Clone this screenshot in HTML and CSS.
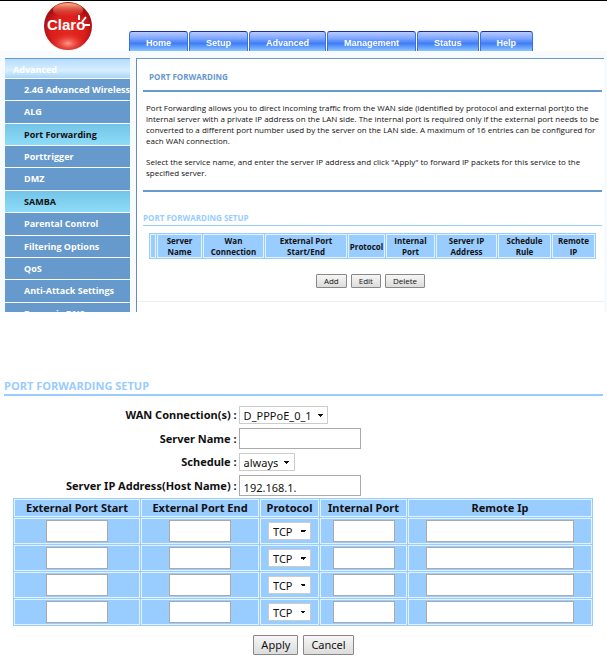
FILE: index.html
```html
<!DOCTYPE html>
<html lang="en">
<head>
    <meta charset="UTF-8">
    <meta name="viewport" content="width=device-width, initial-scale=1.0">
    <title>Port Forwarding</title>
    <link rel="stylesheet" href="styles.css">
</head>
<body>
    <header class="header">
        <div class="logo">
            <svg width="50" height="50" viewBox="0 0 50 50" role="img" aria-label="Claro">
                <defs>
                    <radialGradient id="ball" cx="50%" cy="60%" r="52%">
                        <stop offset="0" stop-color="#e5281f"/>
                        <stop offset="0.7" stop-color="#d81d1c"/>
                        <stop offset="1" stop-color="#a90f12"/>
                    </radialGradient>
                    <linearGradient id="shine" x1="0" y1="0" x2="0" y2="1">
                        <stop offset="0" stop-color="#ffb98f"/>
                        <stop offset="1" stop-color="#dc2a20" stop-opacity="0.2"/>
                    </linearGradient>
                    <radialGradient id="glow" cx="50%" cy="70%" r="50%">
                        <stop offset="0" stop-color="#ff9a8a"/>
                        <stop offset="1" stop-color="#e5281f" stop-opacity="0"/>
                    </radialGradient>
                </defs>
                <circle cx="25" cy="25" r="24" fill="url(#ball)"/>
                <ellipse cx="25" cy="38" rx="19" ry="11" fill="url(#glow)"/>
                <ellipse cx="25" cy="9" rx="15" ry="7" fill="url(#shine)"/>
                <text x="4" y="29" class="logo-text">Claro</text>
                <path d="M36 14v5M43 16l-4 5M41 24h6" stroke="#fff" stroke-width="2" fill="none"/>
            </svg>
        </div>
        <nav class="tabs">
            <a href="#">Home</a>
            <a href="#">Setup</a>
            <a href="#">Advanced</a>
            <a href="#">Management</a>
            <a href="#">Status</a>
            <a href="#">Help</a>
        </nav>
    </header>

    <div class="main">
        <nav class="sidebar">
            <h2>Advanced</h2>
            <div class="menu">
                <a href="#">2.4G Advanced Wireless</a>
                <a href="#">ALG</a>
                <a href="#" class="active">Port Forwarding</a>
                <a href="#">Porttrigger</a>
                <a href="#">DMZ</a>
                <a href="#" class="active">SAMBA</a>
                <a href="#">Parental Control</a>
                <a href="#">Filtering Options</a>
                <a href="#">QoS</a>
                <a href="#">Anti-Attack Settings</a>
                <a href="#">Dynamic DNS</a>
            </div>
        </nav>

        <main class="content">
            <h1>PORT FORWARDING</h1>
            <div class="intro">
                <p>Port Forwarding allows you to direct incoming traffic from the WAN side (identified by protocol and external port)to the internal server with a private IP address on the LAN side. The internal port is required only if the external port needs to be converted to a different port number used by the server on the LAN side. A maximum of 16 entries can be configured for each WAN connection.</p>
                <p>Select the service name, and enter the server IP address and click "Apply" to forward IP packets for this service to the specified server.</p>
            </div>

            <h2>PORT FORWARDING SETUP</h2>
            <table class="list">
                <colgroup>
                    <col class="w-check"><col class="w-name"><col class="w-wan"><col class="w-ext"><col class="w-proto"><col class="w-int"><col class="w-ip"><col class="w-rule"><col>
                </colgroup>
                <tr>
                    <th></th>
                    <th>Server<br>Name</th>
                    <th>Wan<br>Connection</th>
                    <th>External Port<br>Start/End</th>
                    <th>Protocol</th>
                    <th>Internal<br>Port</th>
                    <th>Server IP<br>Address</th>
                    <th>Schedule<br>Rule</th>
                    <th>Remote<br>IP</th>
                </tr>
            </table>
            <div class="actions">
                <button type="button">Add</button>
                <button type="button">Edit</button>
                <button type="button">Delete</button>
            </div>
        </main>
    </div>

    <form class="setup">
        <h2>PORT FORWARDING SETUP</h2>
        <div class="fields">
            <label for="wan">WAN Connection(s) :</label>
            <select id="wan" class="wan"><option>D_PPPoE_0_1</option></select>

            <label for="server-name">Server Name :</label>
            <input type="text" id="server-name">

            <label for="schedule">Schedule :</label>
            <select id="schedule" class="schedule"><option>always</option></select>

            <label for="server-ip">Server IP Address(Host Name) :</label>
            <input type="text" id="server-ip" value="192.168.1.">
        </div>

        <table class="ports">
            <colgroup>
                <col class="p-start"><col class="p-end"><col class="p-proto"><col class="p-int"><col>
            </colgroup>
            <tr>
                <th>External Port Start</th>
                <th>External Port End</th>
                <th>Protocol</th>
                <th>Internal Port</th>
                <th>Remote Ip</th>
            </tr>
            <tr>
                <td><input type="text" aria-label="External Port Start 1"></td>
                <td><input type="text" aria-label="External Port End 1"></td>
                <td><select aria-label="Protocol 1"><option>TCP</option></select></td>
                <td><input type="text" aria-label="Internal Port 1"></td>
                <td><input type="text" class="remote" aria-label="Remote Ip 1"></td>
            </tr>
            <tr>
                <td><input type="text" aria-label="External Port Start 2"></td>
                <td><input type="text" aria-label="External Port End 2"></td>
                <td><select aria-label="Protocol 2"><option>TCP</option></select></td>
                <td><input type="text" aria-label="Internal Port 2"></td>
                <td><input type="text" class="remote" aria-label="Remote Ip 2"></td>
            </tr>
            <tr>
                <td><input type="text" aria-label="External Port Start 3"></td>
                <td><input type="text" aria-label="External Port End 3"></td>
                <td><select aria-label="Protocol 3"><option>TCP</option></select></td>
                <td><input type="text" aria-label="Internal Port 3"></td>
                <td><input type="text" class="remote" aria-label="Remote Ip 3"></td>
            </tr>
            <tr>
                <td><input type="text" aria-label="External Port Start 4"></td>
                <td><input type="text" aria-label="External Port End 4"></td>
                <td><select aria-label="Protocol 4"><option>TCP</option></select></td>
                <td><input type="text" aria-label="Internal Port 4"></td>
                <td><input type="text" class="remote" aria-label="Remote Ip 4"></td>
            </tr>
        </table>

        <div class="buttons">
            <button type="submit">Apply</button>
            <button type="button">Cancel</button>
        </div>
    </form>
</body>
</html>
```
FILE: styles.css
```css
* {
    box-sizing: border-box;
}
body {
    margin: 0;
    background: #fff;
    color: #111;
    font-family: Tahoma, "Noto Sans", sans-serif;
    font-size: 9px;
}
h1, h2, p {
    margin: 0;
}

/* header */
.header {
    display: flex;
    align-items: flex-end;
    height: 51px;
    border-top: 1px solid #000;
}
.logo {
    width: 129px;
    padding-left: 43px;
}
.logo svg {
    display: block;
}
.logo-text {
    font-family: "Liberation Sans", Arial, sans-serif;
    font-size: 15px;
    font-weight: bold;
    fill: #fff;
}
.tabs {
    display: flex;
    gap: 1px;
}
.tabs a {
    height: 20px;
    padding: 0 16px;
    border: 1px solid #3f6fd8;
    border-top-color: #1a2f8c;
    border-bottom: 0;
    border-radius: 3px 3px 0 0;
    background: linear-gradient(#b9ccff, #7ba4ff 35%, #3f7df8 60%, #8cc4ff);
    color: #fff;
    font-family: "Liberation Sans", Arial, sans-serif;
    font-weight: bold;
    line-height: 22px;
    text-decoration: none;
}

/* router page */
.main {
    display: flex;
    height: 261px;
    padding: 7px 3px 0 5px;
    background: #f8fbfd;
    font-family: Tahoma, "Open Sans", sans-serif;
}
.sidebar {
    flex: none;
    width: 125px;
    overflow: hidden;
    border-top: 1px solid #6699cc;
    background: #6699cc;
}
.sidebar h2 {
    height: 19px;
    padding-left: 8px;
    background: linear-gradient(#b5dcfa, #d8efff 60%, #a9d4f5);
    color: #fff;
    font-size: 9px;
    line-height: 21px;
}
.menu {
    display: grid;
    grid-auto-rows: 1fr;
    height: 246px;
}
.menu a {
    padding-left: 19px;
    border-top: 1px solid #fff;
    background: #6699cc;
    color: #fff;
    font-weight: bold;
    line-height: 21px;
    text-decoration: none;
    white-space: nowrap;
}
.menu .active {
    background: linear-gradient(#74c4e8, #8ddcf8);
    color: #111;
}
.content {
    flex: 1;
    margin-left: 6px;
    padding: 10px 2px 0 6px;
    border-top: 1px solid #6f98c6;
    border-left: 1px solid #6c88c0;
    background: #fff;
    font-size: 8px;
}
.content h1 {
    padding: 4px 6px 9px;
    border-bottom: 2px solid #6699cc;
    color: #6699cc;
    font-size: 8px;
    line-height: 8px;
}
.intro {
    padding: 10px 0 12px 3px;
    border-bottom: 2px solid #6699cc;
    line-height: 11px;
}
.intro p + p {
    margin-top: 10px;
}
.content h2 {
    margin-top: 19px;
    border-bottom: 1px solid #99ccff;
    color: #99ccff;
    font-size: 8px;
    line-height: 14px;
}
table {
    table-layout: fixed;
    border-spacing: 1px;
    background: #99ccff;
}
th, td {
    padding: 0;
    border: 1px solid #e3f2ff;
    text-align: center;
}
.list {
    width: calc(100% - 12px);
    margin: 7px 6px 0;
    font-size: 8px;
    line-height: 11px;
}
.w-check { width: 6px; }
.w-name { width: 45px; }
.w-wan { width: 61px; }
.w-ext { width: 82px; }
.w-proto { width: 37px; }
.w-int { width: 49px; }
.w-ip { width: 61px; }
.w-rule { width: 53px; }

button {
    border: 1px solid #888;
    border-radius: 1px;
    background: linear-gradient(#f6f6f6, #dcdcdc);
    color: #111;
    font-family: inherit;
}
.actions {
    display: flex;
    justify-content: center;
    gap: 4px;
    margin: 0 -2px 0 -6px;
    padding: 15px 0 13px;
    border-bottom: 1px solid #eee;
}
.actions button {
    height: 14px;
    padding: 0 7px;
    font-size: 8px;
    line-height: 12px;
}

/* entry form */
.setup {
    padding: 65px 4px 0;
}
.setup h2 {
    border-bottom: 2px solid #99ccff;
    color: #99ccff;
    font-family: Tahoma, "Open Sans", sans-serif;
    font-size: 11px;
    line-height: 17px;
}
.fields {
    display: grid;
    grid-template-columns: 39% 1fr;
    column-gap: 1px;
    row-gap: 4px;
    align-items: center;
    justify-items: start;
    margin-top: 10px;
}
.fields label {
    justify-self: end;
    padding-right: 1px;
    font-size: 11px;
    font-weight: bold;
    line-height: 14px;
}
input, select {
    border: 1px solid #aaa;
    border-radius: 0;
    background-color: #fff;
    color: #111;
    font-family: inherit;
    font-size: 11px;
}
.fields input {
    width: 122px;
    height: 21px;
    padding: 3px 4px 0;
}
/* small black arrow made of two triangles */
select {
    appearance: none;
    height: 18px;
    padding: 0 4px;
    border-color: #ccc;
    background-image:
        linear-gradient(45deg, transparent 50%, #111 50%),
        linear-gradient(-45deg, transparent 50%, #111 50%);
    background-position: right 7px center, right 4px center;
    background-size: 3px 3px;
    background-repeat: no-repeat;
}
.wan {
    width: 89px;
}
.schedule {
    width: 56px;
}
.ports {
    width: calc(100% - 19px);
    margin: 2px 10px 0 9px;
    font-size: 11px;
    line-height: 14px;
}
.ports th {
    height: 18px;
}
.ports td {
    height: 26px;
}
.ports input {
    display: block;
    width: 62px;
    height: 22px;
    margin: 0 auto;
}
.ports .remote {
    width: 148px;
}
.ports select {
    display: block;
    width: 43px;
    margin: 0 auto;
}
.p-start { width: 126px; }
.p-end { width: 118px; }
.p-proto { width: 59px; }
.p-int { width: 87px; }
.buttons {
    display: flex;
    justify-content: center;
    gap: 5px;
    margin-top: 9px;
}
.buttons button {
    height: 20px;
    padding: 0 7px;
    font-size: 11px;
    line-height: 18px;
}
```
